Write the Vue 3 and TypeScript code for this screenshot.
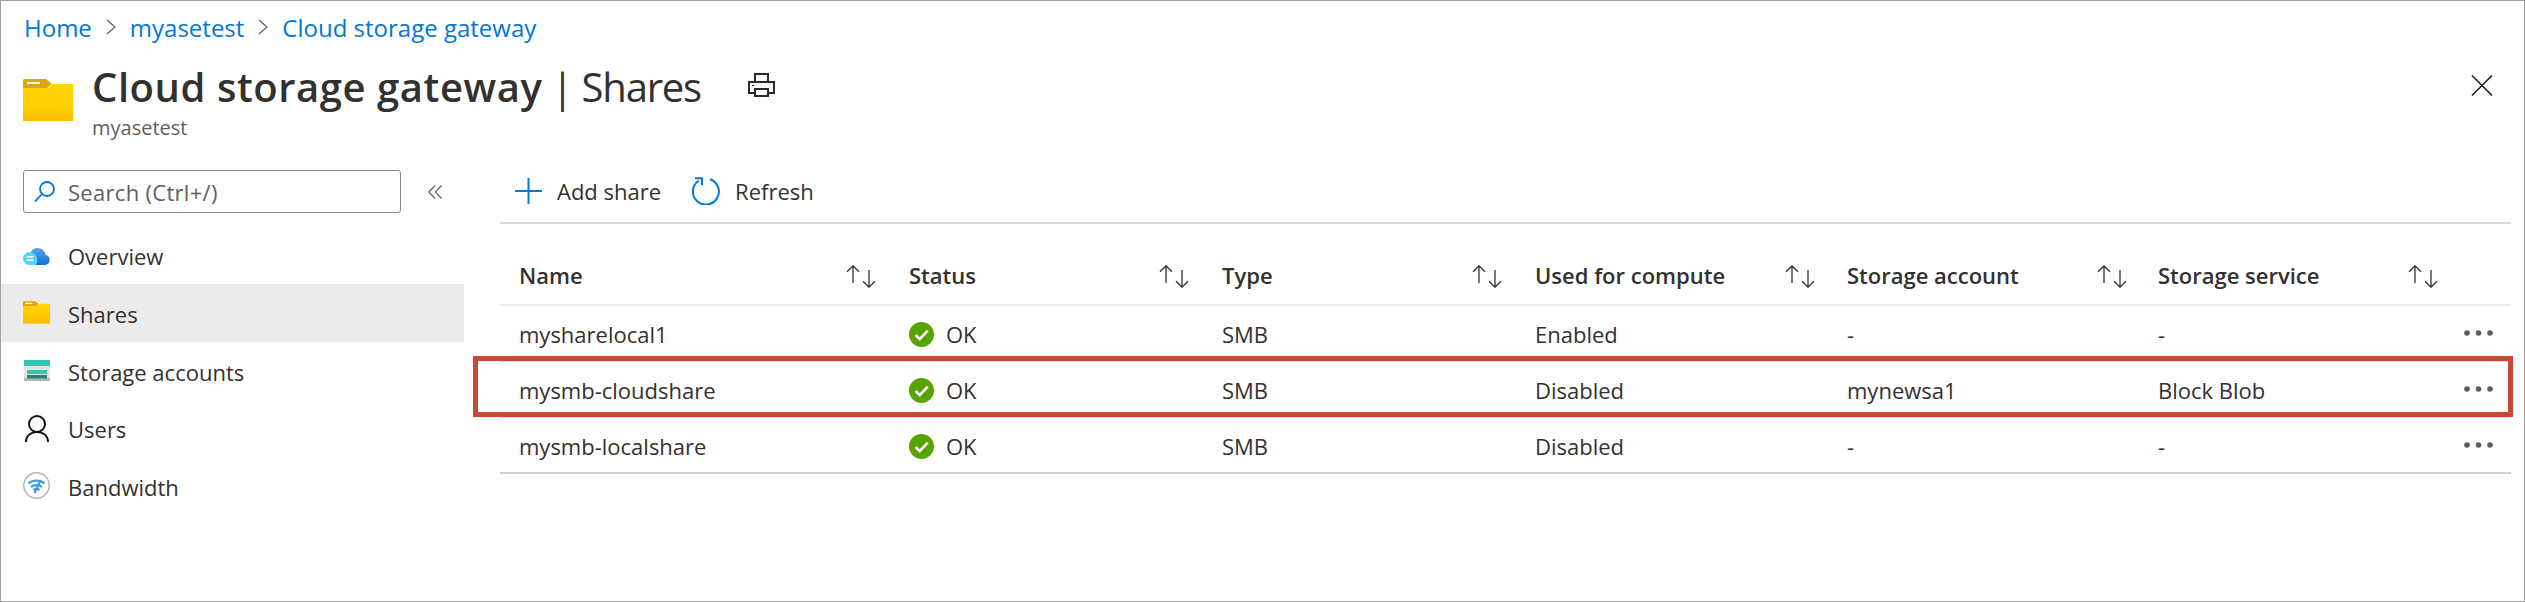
<script setup lang="ts">
interface NavItem {
  label: string
  icon: string
  active?: boolean
}

interface ShareRow {
  name: string
  status: string
  type: string
  compute: string
  account: string
  service: string
}

const navItems: NavItem[] = [
  { label: 'Overview', icon: 'cloud' },
  { label: 'Shares', icon: 'folder', active: true },
  { label: 'Storage accounts', icon: 'storage' },
  { label: 'Users', icon: 'user' },
  { label: 'Bandwidth', icon: 'wifi' },
]

const columns = ['Name', 'Status', 'Type', 'Used for compute', 'Storage account', 'Storage service']

const rows: ShareRow[] = [
  { name: 'mysharelocal1', status: 'OK', type: 'SMB', compute: 'Enabled', account: '-', service: '-' },
  { name: 'mysmb-cloudshare', status: 'OK', type: 'SMB', compute: 'Disabled', account: 'mynewsa1', service: 'Block Blob' },
  { name: 'mysmb-localshare', status: 'OK', type: 'SMB', compute: 'Disabled', account: '-', service: '-' },
]
</script>

<template>
  <div class="frame">
    <nav class="crumbs">
      <a>Home</a>
      <svg class="crumb-sep" width="10" height="16" viewBox="0 0 10 16"><path d="M1 1l8 7-8 7" /></svg>
      <a>myasetest</a>
      <svg class="crumb-sep" width="10" height="16" viewBox="0 0 10 16"><path d="M1 1l8 7-8 7" /></svg>
      <a>Cloud storage gateway</a>
    </nav>

    <header class="blade-head">
      <svg class="head-folder" width="50" height="42" viewBox="0 0 50 42">
        <defs>
          <linearGradient id="folderFill" x1="0" y1="0" x2="0" y2="1">
            <stop offset="0" stop-color="#ffd800" />
            <stop offset="0.6" stop-color="#ffcf00" />
            <stop offset="1" stop-color="#ffb900" />
          </linearGradient>
        </defs>
        <path d="M0 9h25l5-4h20v37H0z" fill="url(#folderFill)" />
        <path d="M1 0h22l6 5-5 4H0V1z" fill="#dfa70f" />
        <rect x="4" y="3" width="13" height="2" fill="#fff" />
      </svg>
      <div class="head-text">
        <h1 class="title"><b>Cloud storage gateway</b> | Shares</h1>
        <div class="subtitle">myasetest</div>
      </div>
      <svg class="print" width="28" height="24" viewBox="0 0 28 24" fill="none" stroke="#2b2b2b" stroke-width="2">
        <path d="M7 9V1h13v8" />
        <path d="M7 20H1V9h25v11h-6" />
        <rect x="7" y="16" width="13" height="7" />
        <path d="M4 12.500h2" stroke-width="1" />
      </svg>
      <svg class="close" width="22" height="21" viewBox="0 0 22 21" fill="none" stroke="#222" stroke-width="1.600">
        <path d="M1 .5l20 20M21 .5l-20 20" />
      </svg>
    </header>

    <div class="blade-body">
      <aside class="sidebar">
        <div class="search-row">
          <div class="search">
            <svg width="21" height="21" viewBox="0 0 21 21" fill="none" stroke="#0078d4" stroke-width="1.800">
              <circle cx="13" cy="8" r="7" />
              <path d="M8 13l-7 7.500" />
            </svg>
            <span>Search (Ctrl+/)</span>
          </div>
          <svg class="collapse" width="14" height="14" viewBox="0 0 14 14" fill="none" stroke="#605e5c" stroke-width="1.200">
            <path d="M7 .5L.8 7 7 13.500M13.500 .5L7.300 7l6.200 6.500" />
          </svg>
        </div>

        <ul class="nav">
          <li v-for="item in navItems" :key="item.label" class="nav-item" :class="{ active: item.active }">
            <span class="nav-icon">
              <svg v-if="item.icon === 'cloud'" width="27" height="19" viewBox="0 0 27 19">
                <defs>
                  <linearGradient id="cloudFill" x1="0" y1="0" x2="0" y2="1">
                    <stop offset="0" stop-color="#5ea0ef" />
                    <stop offset="1" stop-color="#0f72d0" />
                  </linearGradient>
                </defs>
                <path d="M7 19h15a5 5 0 0 0 .6-9.900A8 8 0 0 0 8 5.500z" fill="url(#cloudFill)" />
                <path d="M6.500 6C2.800 6 0 9 0 12.500S2.800 19 6.500 19H13c1-2 1.500-4 1.200-6.500C13.800 9 10.500 6 6.500 6z" fill="#4fd8f5" />
                <path d="M3.500 10.800h7M3.500 14.200h7" stroke="#fff" stroke-width="1.400" />
              </svg>
              <svg v-else-if="item.icon === 'folder'" width="27" height="23" viewBox="0 0 50 42">
                <defs>
                  <linearGradient id="navFolderFill" x1="0" y1="0" x2="0" y2="1">
                    <stop offset="0" stop-color="#ffd800" />
                    <stop offset="1" stop-color="#ffb900" />
                  </linearGradient>
                </defs>
                <path d="M0 9h25l5-4h20v37H0z" fill="url(#navFolderFill)" />
                <path d="M1 0h22l6 5-5 4H0V1z" fill="#dfa70f" />
                <rect x="4" y="3" width="13" height="2" fill="#fff" />
              </svg>
              <svg v-else-if="item.icon === 'storage'" width="26" height="21" viewBox="0 0 26 21">
                <rect x="0" y="0" width="26" height="21" fill="#e4e4e4" />
                <rect x="0" y="18" width="26" height="3" fill="#b5b5b5" />
                <rect x="0" y="0" width="26" height="6" fill="#37c2b1" />
                <rect x="3" y="10" width="20" height="4" fill="#37c2b1" />
                <rect x="3" y="15" width="20" height="3.500" fill="#258277" />
              </svg>
              <svg v-else-if="item.icon === 'user'" width="24" height="27" viewBox="0 0 24 27" fill="none" stroke="#111" stroke-width="2">
                <circle cx="12" cy="9" r="8" />
                <path d="M1 27c0-6.500 5-10 11-10s11 3.500 11 10" />
              </svg>
              <svg v-else width="27" height="27" viewBox="0 0 27 27" fill="none">
                <circle cx="13.500" cy="13.500" r="12.700" stroke="#b4b4b4" stroke-width="1.400" fill="#fff" />
                <g stroke="#3e9bd8" stroke-width="2.200">
                  <path d="M5.500 11.500c4.500-4 11.500-4 16 0" />
                  <path d="M8 15c3-2.600 8-2.600 11 0" />
                  <path d="M10.500 18c1.700-1.300 4.300-1.300 6 0" />
                  <path d="M17.500 8.500L11.500 21" />
                </g>
              </svg>
            </span>
            <span class="nav-label">{{ item.label }}</span>
          </li>
        </ul>
      </aside>

      <main class="content">
        <div class="toolbar">
          <button class="tool">
            <svg width="27" height="26" viewBox="0 0 27 26" fill="none" stroke="#0078d4" stroke-width="2">
              <path d="M13.500 0v26M0 13h27" />
            </svg>
            <span>Add share</span>
          </button>
          <button class="tool">
            <svg width="29" height="28" viewBox="0 0 29 28" fill="none" stroke="#0078d4" stroke-width="2">
              <path d="M19 2.200A13 13 0 1 1 8 3.500" />
              <path d="M4 1.200h7V8" />
            </svg>
            <span>Refresh</span>
          </button>
        </div>

        <div class="grid head-row">
          <div v-for="(col, i) in columns" :key="col" class="cell">
            <span class="col-label" :class="{ wide: i === 0 }">{{ col }}</span>
            <svg class="sort" width="30" height="23" viewBox="0 0 30 23" fill="none" stroke="#323130" stroke-width="1.300">
              <path d="M7 18V.8M1 6.800l6-6 6 6" />
              <path d="M23 5v17.200M17 16.200l6 6 6-6" />
            </svg>
          </div>
          <div class="cell"></div>
        </div>

        <div v-for="row in rows" :key="row.name" class="grid data-row">
          <div class="cell">{{ row.name }}</div>
          <div class="cell status">
            <svg width="25" height="25" viewBox="0 0 25 25">
              <circle cx="12.500" cy="12.500" r="12.500" fill="#57a300" />
              <path d="M6.500 13l4.200 4.200 8-8.500" fill="none" stroke="#fff" stroke-width="2.600" />
            </svg>
            <span>{{ row.status }}</span>
          </div>
          <div class="cell">{{ row.type }}</div>
          <div class="cell">{{ row.compute }}</div>
          <div class="cell">{{ row.account }}</div>
          <div class="cell">{{ row.service }}</div>
          <div class="cell more">
            <svg width="29" height="6" viewBox="0 0 29 6" fill="#605e5c">
              <circle cx="3" cy="3" r="2.800" />
              <circle cx="14.500" cy="3" r="2.800" />
              <circle cx="26" cy="3" r="2.800" />
            </svg>
          </div>
        </div>
      </main>
    </div>

    <!-- annotation drawn over the second row -->
    <div class="callout"></div>
  </div>
</template>

<style>
html,
body {
  margin: 0;
  background: #fff;
}
</style>

<style scoped>
.frame {
  position: relative;
  box-sizing: border-box;
  width: 2525px;
  height: 602px;
  border: 1px solid #a0a0a0;
  background: #fff;
  overflow: hidden;
  font-family: "Open Sans", "Liberation Sans", sans-serif;
  font-size: 22px;
  color: #323130;
}

.crumbs {
  display: flex;
  align-items: center;
  gap: 14px;
  height: 30px;
  padding: 11px 0 0 23px;
  font-size: 24px;
  color: #0078d4;
}

.crumb-sep {
  fill: none;
  stroke: #605e5c;
  stroke-width: 1.2;
}

.blade-head {
  display: flex;
  align-items: flex-start;
  height: 118px;
  padding: 0 31px 0 22px;
}

.head-folder {
  margin-top: 37px;
}

.head-text {
  margin: 20px 0 0 19px;
}

.title {
  margin: 0;
  font-size: 40px;
  font-weight: 400;
  line-height: 50px;
  letter-spacing: -1.2px;
  white-space: nowrap;
}

.title b {
  font-weight: 600;
  letter-spacing: 0.55px;
}

.subtitle {
  margin-top: 1px;
  font-size: 20px;
  line-height: 30px;
  color: #605e5c;
}

.print {
  margin: 31px 0 0 47px;
}

.close {
  margin: 33px 0 0 auto;
}

.blade-body {
  display: flex;
}

.sidebar {
  width: 463px;
  flex: none;
}

.search-row {
  display: flex;
  align-items: center;
  height: 43px;
  margin-top: 10px;
  padding-left: 22px;
}

.search {
  box-sizing: border-box;
  display: flex;
  align-items: center;
  gap: 13px;
  width: 378px;
  height: 43px;
  padding-left: 10px;
  border: 1px solid #8a8886;
  border-radius: 3px;
  letter-spacing: 0.3px;
  color: #605e5c;
}

.collapse {
  margin-left: 27px;
}

.nav {
  margin: 13.6px 0 0;
  padding: 0;
  list-style: none;
}

.nav-item {
  display: flex;
  align-items: center;
  height: 57.6px;
  padding-left: 22px;
}

.nav-item.active {
  background: #edebe9;
}

.nav-icon {
  display: flex;
  justify-content: center;
  width: 27px;
  margin-right: 18px;
}

.nav-label {
  padding-top: 2px;
}

.content {
  width: 2011px;
  margin-left: 36px;
}

.toolbar {
  display: flex;
  align-items: center;
  gap: 30px;
  height: 62px;
  padding-left: 15px;
  border-bottom: 2px solid #d9d9d9;
}

.tool {
  display: flex;
  align-items: center;
  gap: 15px;
  padding: 0;
  border: 0;
  background: none;
  color: inherit;
  font: inherit;
}

.grid {
  display: grid;
  grid-template-columns: 390px 313px 313px 312px 311px 309px 1fr;
}

.cell {
  display: flex;
  align-items: center;
  padding-left: 19px;
  white-space: nowrap;
}

.head-row {
  box-sizing: border-box;
  height: 82px;
  padding-top: 22px;
  border-bottom: 2px solid #edebe9;
  font-weight: 600;
}

.sort {
  margin-top: 2px;
}

.col-label {
  width: 250px;
}

.col-label.wide {
  width: 327px;
}

.data-row {
  box-sizing: border-box;
  height: 56px;
  padding-top: 2px;
  border-bottom: 2px solid #e1dfdd;
}

.data-row:last-child {
  border-bottom-color: #d0d0d0;
}

.status {
  gap: 12px;
}

.more {
  padding-left: 16px;
}

.more svg {
  margin-bottom: 3px;
}

.callout {
  position: absolute;
  left: 472px;
  top: 355px;
  box-sizing: border-box;
  width: 2040px;
  height: 61px;
  border: 5px solid #c8493a;
}
</style>
